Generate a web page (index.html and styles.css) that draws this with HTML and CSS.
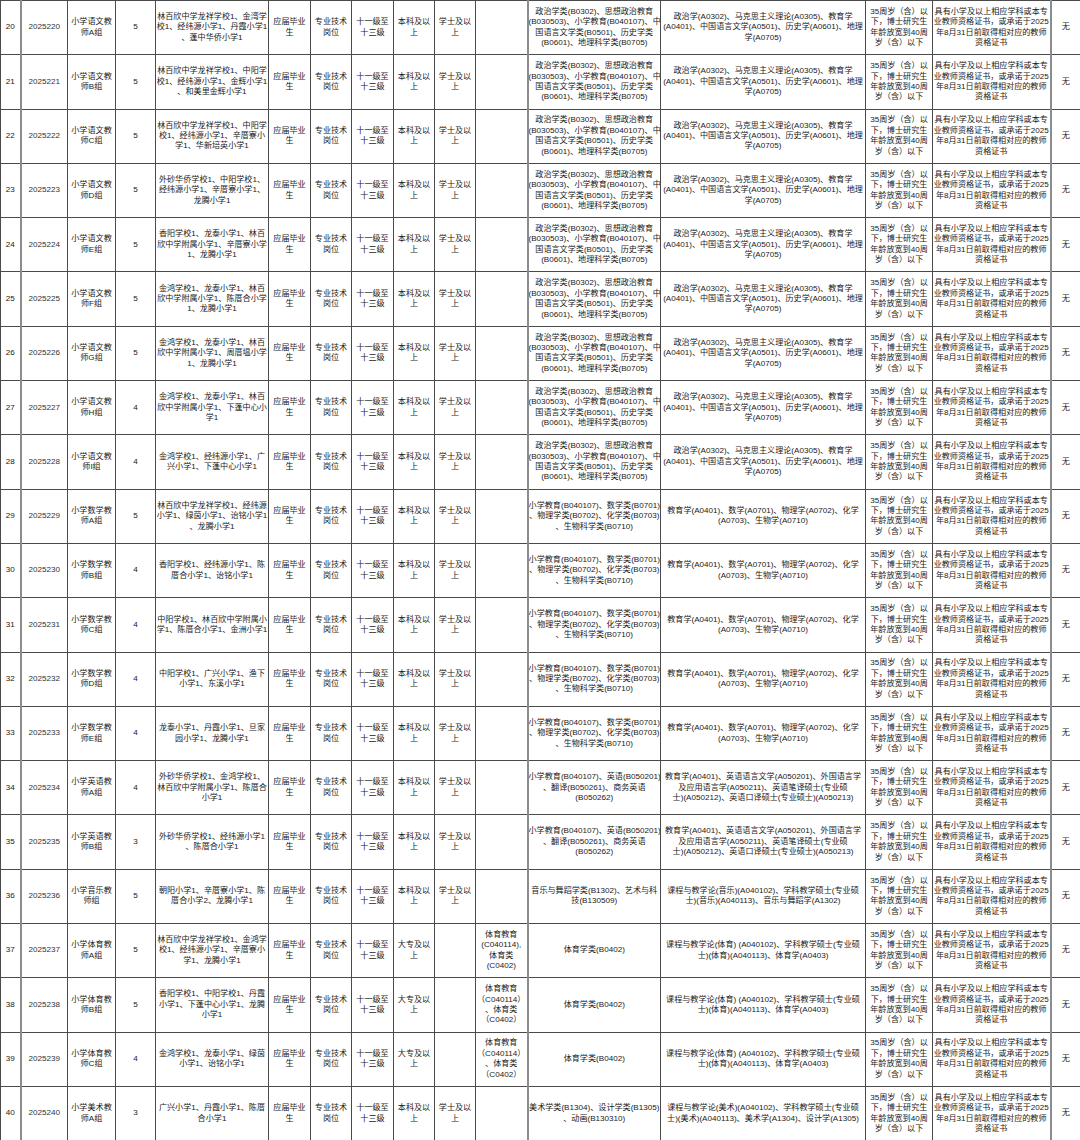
FILE: index.html
```html
<!DOCTYPE html>
<html lang="zh-CN">
<head>
<meta charset="utf-8">
<title>岗位表</title>
<link rel="stylesheet" href="styles.css">
</head>
<body>
<table class="grid">
<colgroup>
<col class="w-no"><col class="w-code"><col class="w-name"><col class="w-num"><col class="w-school">
<col class="w-obj"><col class="w-type"><col class="w-level"><col class="w-edu"><col class="w-deg">
<col class="w-zk"><col class="w-bk"><col class="w-yjs"><col class="w-age"><col class="w-qual"><col class="w-other">
</colgroup>
<tbody>
<tr>
<td>20</td><td class="sep num">2025220</td><td>小学语文教<br>师A组</td><td>5</td>
<td>林百欣中学龙祥学校1、金湾学<br>校1、经纬源小学1、丹霞小学1<br>、蓬中华侨小学1</td>
<td>应届毕业<br>生</td><td>专业技术<br>岗位</td><td>十一级至<br>十三级</td><td>本科及以<br>上</td><td>学士及以<br>上</td><td></td>
<td class="sep">政治学类(B0302)、思想政治教育<br>(B030503)、小学教育(B040107)、中<br>国语言文学类(B0501)、历史学类<br>(B0601)、地理科学类(B0705)</td>
<td>政治学(A0302)、马克思主义理论(A0305)、教育学<br>(A0401)、中国语言文学(A0501)、历史学(A0601)、地理<br>学(A0705)</td>
<td>35周岁（含）以<br>下，博士研究生<br>年龄放宽到40周<br>岁（含）以下</td>
<td>具有小学及以上相应学科或本专<br>业教师资格证书，或承诺于2025<br>年8月31日前取得相对应的教师<br>资格证书</td><td class="sep">无</td>
</tr>
<tr>
<td>21</td><td class="sep num">2025221</td><td>小学语文教<br>师B组</td><td>5</td>
<td>林百欣中学龙祥学校1、中阳学<br>校1、经纬源小学1、金辉小学1<br>、和美里金辉小学1</td>
<td>应届毕业<br>生</td><td>专业技术<br>岗位</td><td>十一级至<br>十三级</td><td>本科及以<br>上</td><td>学士及以<br>上</td><td></td>
<td class="sep">政治学类(B0302)、思想政治教育<br>(B030503)、小学教育(B040107)、中<br>国语言文学类(B0501)、历史学类<br>(B0601)、地理科学类(B0705)</td>
<td>政治学(A0302)、马克思主义理论(A0305)、教育学<br>(A0401)、中国语言文学(A0501)、历史学(A0601)、地理<br>学(A0705)</td>
<td>35周岁（含）以<br>下，博士研究生<br>年龄放宽到40周<br>岁（含）以下</td>
<td>具有小学及以上相应学科或本专<br>业教师资格证书，或承诺于2025<br>年8月31日前取得相对应的教师<br>资格证书</td><td class="sep">无</td>
</tr>
<tr>
<td>22</td><td class="sep num">2025222</td><td>小学语文教<br>师C组</td><td>5</td>
<td>林百欣中学龙祥学校1、中阳学<br>校1、经纬源小学1、辛厝寮小<br>学1、华新培英小学1</td>
<td>应届毕业<br>生</td><td>专业技术<br>岗位</td><td>十一级至<br>十三级</td><td>本科及以<br>上</td><td>学士及以<br>上</td><td></td>
<td class="sep">政治学类(B0302)、思想政治教育<br>(B030503)、小学教育(B040107)、中<br>国语言文学类(B0501)、历史学类<br>(B0601)、地理科学类(B0705)</td>
<td>政治学(A0302)、马克思主义理论(A0305)、教育学<br>(A0401)、中国语言文学(A0501)、历史学(A0601)、地理<br>学(A0705)</td>
<td>35周岁（含）以<br>下，博士研究生<br>年龄放宽到40周<br>岁（含）以下</td>
<td>具有小学及以上相应学科或本专<br>业教师资格证书，或承诺于2025<br>年8月31日前取得相对应的教师<br>资格证书</td><td class="sep">无</td>
</tr>
<tr>
<td>23</td><td class="sep num">2025223</td><td>小学语文教<br>师D组</td><td>5</td>
<td>外砂华侨学校1、中阳学校1、<br>经纬源小学1、辛厝寮小学1、<br>龙腾小学1</td>
<td>应届毕业<br>生</td><td>专业技术<br>岗位</td><td>十一级至<br>十三级</td><td>本科及以<br>上</td><td>学士及以<br>上</td><td></td>
<td class="sep">政治学类(B0302)、思想政治教育<br>(B030503)、小学教育(B040107)、中<br>国语言文学类(B0501)、历史学类<br>(B0601)、地理科学类(B0705)</td>
<td>政治学(A0302)、马克思主义理论(A0305)、教育学<br>(A0401)、中国语言文学(A0501)、历史学(A0601)、地理<br>学(A0705)</td>
<td>35周岁（含）以<br>下，博士研究生<br>年龄放宽到40周<br>岁（含）以下</td>
<td>具有小学及以上相应学科或本专<br>业教师资格证书，或承诺于2025<br>年8月31日前取得相对应的教师<br>资格证书</td><td class="sep">无</td>
</tr>
<tr>
<td>24</td><td class="sep num">2025224</td><td>小学语文教<br>师E组</td><td>5</td>
<td>香阳学校1、龙泰小学1、林百<br>欣中学附属小学1、辛厝寮小学<br>1、龙腾小学1</td>
<td>应届毕业<br>生</td><td>专业技术<br>岗位</td><td>十一级至<br>十三级</td><td>本科及以<br>上</td><td>学士及以<br>上</td><td></td>
<td class="sep">政治学类(B0302)、思想政治教育<br>(B030503)、小学教育(B040107)、中<br>国语言文学类(B0501)、历史学类<br>(B0601)、地理科学类(B0705)</td>
<td>政治学(A0302)、马克思主义理论(A0305)、教育学<br>(A0401)、中国语言文学(A0501)、历史学(A0601)、地理<br>学(A0705)</td>
<td>35周岁（含）以<br>下，博士研究生<br>年龄放宽到40周<br>岁（含）以下</td>
<td>具有小学及以上相应学科或本专<br>业教师资格证书，或承诺于2025<br>年8月31日前取得相对应的教师<br>资格证书</td><td class="sep">无</td>
</tr>
<tr>
<td>25</td><td class="sep num">2025225</td><td>小学语文教<br>师F组</td><td>5</td>
<td>金鸿学校1、龙泰小学1、林百<br>欣中学附属小学1、陈厝合小学<br>1、龙腾小学1</td>
<td>应届毕业<br>生</td><td>专业技术<br>岗位</td><td>十一级至<br>十三级</td><td>本科及以<br>上</td><td>学士及以<br>上</td><td></td>
<td class="sep">政治学类(B0302)、思想政治教育<br>(B030503)、小学教育(B040107)、中<br>国语言文学类(B0501)、历史学类<br>(B0601)、地理科学类(B0705)</td>
<td>政治学(A0302)、马克思主义理论(A0305)、教育学<br>(A0401)、中国语言文学(A0501)、历史学(A0601)、地理<br>学(A0705)</td>
<td>35周岁（含）以<br>下，博士研究生<br>年龄放宽到40周<br>岁（含）以下</td>
<td>具有小学及以上相应学科或本专<br>业教师资格证书，或承诺于2025<br>年8月31日前取得相对应的教师<br>资格证书</td><td class="sep">无</td>
</tr>
<tr>
<td>26</td><td class="sep num">2025226</td><td>小学语文教<br>师G组</td><td>5</td>
<td>金鸿学校1、龙泰小学1、林百<br>欣中学附属小学1、周厝塭小学<br>1、龙腾小学1</td>
<td>应届毕业<br>生</td><td>专业技术<br>岗位</td><td>十一级至<br>十三级</td><td>本科及以<br>上</td><td>学士及以<br>上</td><td></td>
<td class="sep">政治学类(B0302)、思想政治教育<br>(B030503)、小学教育(B040107)、中<br>国语言文学类(B0501)、历史学类<br>(B0601)、地理科学类(B0705)</td>
<td>政治学(A0302)、马克思主义理论(A0305)、教育学<br>(A0401)、中国语言文学(A0501)、历史学(A0601)、地理<br>学(A0705)</td>
<td>35周岁（含）以<br>下，博士研究生<br>年龄放宽到40周<br>岁（含）以下</td>
<td>具有小学及以上相应学科或本专<br>业教师资格证书，或承诺于2025<br>年8月31日前取得相对应的教师<br>资格证书</td><td class="sep">无</td>
</tr>
<tr>
<td>27</td><td class="sep num">2025227</td><td>小学语文教<br>师H组</td><td>4</td>
<td>金鸿学校1、龙泰小学1、林百<br>欣中学附属小学1、下蓬中心小<br>学1</td>
<td>应届毕业<br>生</td><td>专业技术<br>岗位</td><td>十一级至<br>十三级</td><td>本科及以<br>上</td><td>学士及以<br>上</td><td></td>
<td class="sep">政治学类(B0302)、思想政治教育<br>(B030503)、小学教育(B040107)、中<br>国语言文学类(B0501)、历史学类<br>(B0601)、地理科学类(B0705)</td>
<td>政治学(A0302)、马克思主义理论(A0305)、教育学<br>(A0401)、中国语言文学(A0501)、历史学(A0601)、地理<br>学(A0705)</td>
<td>35周岁（含）以<br>下，博士研究生<br>年龄放宽到40周<br>岁（含）以下</td>
<td>具有小学及以上相应学科或本专<br>业教师资格证书，或承诺于2025<br>年8月31日前取得相对应的教师<br>资格证书</td><td class="sep">无</td>
</tr>
<tr>
<td>28</td><td class="sep num">2025228</td><td>小学语文教<br>师I组</td><td>4</td>
<td>金鸿学校1、经纬源小学1、广<br>兴小学1、下蓬中心小学1</td>
<td>应届毕业<br>生</td><td>专业技术<br>岗位</td><td>十一级至<br>十三级</td><td>本科及以<br>上</td><td>学士及以<br>上</td><td></td>
<td class="sep">政治学类(B0302)、思想政治教育<br>(B030503)、小学教育(B040107)、中<br>国语言文学类(B0501)、历史学类<br>(B0601)、地理科学类(B0705)</td>
<td>政治学(A0302)、马克思主义理论(A0305)、教育学<br>(A0401)、中国语言文学(A0501)、历史学(A0601)、地理<br>学(A0705)</td>
<td>35周岁（含）以<br>下，博士研究生<br>年龄放宽到40周<br>岁（含）以下</td>
<td>具有小学及以上相应学科或本专<br>业教师资格证书，或承诺于2025<br>年8月31日前取得相对应的教师<br>资格证书</td><td class="sep">无</td>
</tr>
<tr>
<td>29</td><td class="sep num">2025229</td><td>小学数学教<br>师A组</td><td>5</td>
<td>林百欣中学龙祥学校1、经纬源<br>小学1、绿茵小学1、诒铭小学1<br>、龙腾小学1</td>
<td>应届毕业<br>生</td><td>专业技术<br>岗位</td><td>十一级至<br>十三级</td><td>本科及以<br>上</td><td>学士及以<br>上</td><td></td>
<td class="sep">小学教育(B040107)、数学类(B0701)<br>、物理学类(B0702)、化学类(B0703)<br>、生物科学类(B0710)</td>
<td>教育学(A0401)、数学(A0701)、物理学(A0702)、化学<br>(A0703)、生物学(A0710)</td>
<td>35周岁（含）以<br>下，博士研究生<br>年龄放宽到40周<br>岁（含）以下</td>
<td>具有小学及以上相应学科或本专<br>业教师资格证书，或承诺于2025<br>年8月31日前取得相对应的教师<br>资格证书</td><td class="sep">无</td>
</tr>
<tr>
<td>30</td><td class="sep num">2025230</td><td>小学数学教<br>师B组</td><td>4</td>
<td>香阳学校1、经纬源小学1、陈<br>厝合小学1、诒铭小学1</td>
<td>应届毕业<br>生</td><td>专业技术<br>岗位</td><td>十一级至<br>十三级</td><td>本科及以<br>上</td><td>学士及以<br>上</td><td></td>
<td class="sep">小学教育(B040107)、数学类(B0701)<br>、物理学类(B0702)、化学类(B0703)<br>、生物科学类(B0710)</td>
<td>教育学(A0401)、数学(A0701)、物理学(A0702)、化学<br>(A0703)、生物学(A0710)</td>
<td>35周岁（含）以<br>下，博士研究生<br>年龄放宽到40周<br>岁（含）以下</td>
<td>具有小学及以上相应学科或本专<br>业教师资格证书，或承诺于2025<br>年8月31日前取得相对应的教师<br>资格证书</td><td class="sep">无</td>
</tr>
<tr>
<td>31</td><td class="sep num">2025231</td><td>小学数学教<br>师C组</td><td>4</td>
<td>中阳学校1、林百欣中学附属小<br>学1、陈厝合小学1、金洲小学1</td>
<td>应届毕业<br>生</td><td>专业技术<br>岗位</td><td>十一级至<br>十三级</td><td>本科及以<br>上</td><td>学士及以<br>上</td><td></td>
<td class="sep">小学教育(B040107)、数学类(B0701)<br>、物理学类(B0702)、化学类(B0703)<br>、生物科学类(B0710)</td>
<td>教育学(A0401)、数学(A0701)、物理学(A0702)、化学<br>(A0703)、生物学(A0710)</td>
<td>35周岁（含）以<br>下，博士研究生<br>年龄放宽到40周<br>岁（含）以下</td>
<td>具有小学及以上相应学科或本专<br>业教师资格证书，或承诺于2025<br>年8月31日前取得相对应的教师<br>资格证书</td><td class="sep">无</td>
</tr>
<tr>
<td>32</td><td class="sep num">2025232</td><td>小学数学教<br>师D组</td><td>4</td>
<td>中阳学校1、广兴小学1、渔下<br>小学1、东溪小学1</td>
<td>应届毕业<br>生</td><td>专业技术<br>岗位</td><td>十一级至<br>十三级</td><td>本科及以<br>上</td><td>学士及以<br>上</td><td></td>
<td class="sep">小学教育(B040107)、数学类(B0701)<br>、物理学类(B0702)、化学类(B0703)<br>、生物科学类(B0710)</td>
<td>教育学(A0401)、数学(A0701)、物理学(A0702)、化学<br>(A0703)、生物学(A0710)</td>
<td>35周岁（含）以<br>下，博士研究生<br>年龄放宽到40周<br>岁（含）以下</td>
<td>具有小学及以上相应学科或本专<br>业教师资格证书，或承诺于2025<br>年8月31日前取得相对应的教师<br>资格证书</td><td class="sep">无</td>
</tr>
<tr>
<td>33</td><td class="sep num">2025233</td><td>小学数学教<br>师E组</td><td>4</td>
<td>龙泰小学1、丹霞小学1、旦家<br>园小学1、龙腾小学1</td>
<td>应届毕业<br>生</td><td>专业技术<br>岗位</td><td>十一级至<br>十三级</td><td>本科及以<br>上</td><td>学士及以<br>上</td><td></td>
<td class="sep">小学教育(B040107)、数学类(B0701)<br>、物理学类(B0702)、化学类(B0703)<br>、生物科学类(B0710)</td>
<td>教育学(A0401)、数学(A0701)、物理学(A0702)、化学<br>(A0703)、生物学(A0710)</td>
<td>35周岁（含）以<br>下，博士研究生<br>年龄放宽到40周<br>岁（含）以下</td>
<td>具有小学及以上相应学科或本专<br>业教师资格证书，或承诺于2025<br>年8月31日前取得相对应的教师<br>资格证书</td><td class="sep">无</td>
</tr>
<tr>
<td>34</td><td class="sep num">2025234</td><td>小学英语教<br>师A组</td><td>4</td>
<td>外砂华侨学校1、金鸿学校1、<br>林百欣中学附属小学1、陈厝合<br>小学1</td>
<td>应届毕业<br>生</td><td>专业技术<br>岗位</td><td>十一级至<br>十三级</td><td>本科及以<br>上</td><td>学士及以<br>上</td><td></td>
<td class="sep">小学教育(B040107)、英语(B050201)<br>、翻译(B050261)、商务英语<br>(B050262)</td>
<td>教育学(A0401)、英语语言文学(A050201)、外国语言学<br>及应用语言学(A050211)、英语笔译硕士(专业硕<br>士)(A050212)、英语口译硕士(专业硕士)(A050213)</td>
<td>35周岁（含）以<br>下，博士研究生<br>年龄放宽到40周<br>岁（含）以下</td>
<td>具有小学及以上相应学科或本专<br>业教师资格证书，或承诺于2025<br>年8月31日前取得相对应的教师<br>资格证书</td><td class="sep">无</td>
</tr>
<tr>
<td>35</td><td class="sep num">2025235</td><td>小学英语教<br>师B组</td><td>3</td>
<td>外砂华侨学校1、经纬源小学1<br>、陈厝合小学1</td>
<td>应届毕业<br>生</td><td>专业技术<br>岗位</td><td>十一级至<br>十三级</td><td>本科及以<br>上</td><td>学士及以<br>上</td><td></td>
<td class="sep">小学教育(B040107)、英语(B050201)<br>、翻译(B050261)、商务英语<br>(B050262)</td>
<td>教育学(A0401)、英语语言文学(A050201)、外国语言学<br>及应用语言学(A050211)、英语笔译硕士(专业硕<br>士)(A050212)、英语口译硕士(专业硕士)(A050213)</td>
<td>35周岁（含）以<br>下，博士研究生<br>年龄放宽到40周<br>岁（含）以下</td>
<td>具有小学及以上相应学科或本专<br>业教师资格证书，或承诺于2025<br>年8月31日前取得相对应的教师<br>资格证书</td><td class="sep">无</td>
</tr>
<tr>
<td>36</td><td class="sep num">2025236</td><td>小学音乐教<br>师组</td><td>5</td>
<td>朝阳小学1、辛厝寮小学1、陈<br>厝合小学2、龙腾小学1</td>
<td>应届毕业<br>生</td><td>专业技术<br>岗位</td><td>十一级至<br>十三级</td><td>本科及以<br>上</td><td>学士及以<br>上</td><td></td>
<td class="sep">音乐与舞蹈学类(B1302)、艺术与科<br>技(B130509)</td>
<td>课程与教学论(音乐)(A040102)、学科教学硕士(专业硕<br>士)(音乐)(A040113)、音乐与舞蹈学(A1302)</td>
<td>35周岁（含）以<br>下，博士研究生<br>年龄放宽到40周<br>岁（含）以下</td>
<td>具有小学及以上相应学科或本专<br>业教师资格证书，或承诺于2025<br>年8月31日前取得相对应的教师<br>资格证书</td><td class="sep">无</td>
</tr>
<tr>
<td>37</td><td class="sep num">2025237</td><td>小学体育教<br>师A组</td><td>5</td>
<td>林百欣中学龙祥学校1、金鸿学<br>校1、经纬源小学1、辛厝寮小<br>学1、龙腾小学1</td>
<td>应届毕业<br>生</td><td>专业技术<br>岗位</td><td>十一级至<br>十三级</td><td>大专及以<br>上</td><td></td>
<td>体育教育<br>(C040114),<br>体育类<br>(C0402)</td>
<td class="sep">体育学类(B0402)</td>
<td>课程与教学论(体育) (A040102)、学科教学硕士(专业硕<br>士)(体育)(A040113)、体育学(A0403)</td>
<td>35周岁（含）以<br>下，博士研究生<br>年龄放宽到40周<br>岁（含）以下</td>
<td>具有小学及以上相应学科或本专<br>业教师资格证书，或承诺于2025<br>年8月31日前取得相对应的教师<br>资格证书</td><td class="sep">无</td>
</tr>
<tr>
<td>38</td><td class="sep num">2025238</td><td>小学体育教<br>师B组</td><td>5</td>
<td>香阳学校1、中阳学校1、丹霞<br>小学1、下蓬中心小学1、龙腾<br>小学1</td>
<td>应届毕业<br>生</td><td>专业技术<br>岗位</td><td>十一级至<br>十三级</td><td>大专及以<br>上</td><td></td>
<td>体育教育<br>（C040114）<br>、体育类<br>（C0402）</td>
<td class="sep">体育学类(B0402)</td>
<td>课程与教学论(体育) (A040102)、学科教学硕士(专业硕<br>士)(体育)(A040113)、体育学(A0403)</td>
<td>35周岁（含）以<br>下，博士研究生<br>年龄放宽到40周<br>岁（含）以下</td>
<td>具有小学及以上相应学科或本专<br>业教师资格证书，或承诺于2025<br>年8月31日前取得相对应的教师<br>资格证书</td><td class="sep">无</td>
</tr>
<tr>
<td>39</td><td class="sep num">2025239</td><td>小学体育教<br>师C组</td><td>4</td>
<td>金鸿学校1、龙泰小学1、绿茵<br>小学1、诒铭小学1</td>
<td>应届毕业<br>生</td><td>专业技术<br>岗位</td><td>十一级至<br>十三级</td><td>大专及以<br>上</td><td></td>
<td>体育教育<br>（C040114）<br>、体育类<br>（C0402）</td>
<td class="sep">体育学类(B0402)</td>
<td>课程与教学论(体育) (A040102)、学科教学硕士(专业硕<br>士)(体育)(A040113)、体育学(A0403)</td>
<td>35周岁（含）以<br>下，博士研究生<br>年龄放宽到40周<br>岁（含）以下</td>
<td>具有小学及以上相应学科或本专<br>业教师资格证书，或承诺于2025<br>年8月31日前取得相对应的教师<br>资格证书</td><td class="sep">无</td>
</tr>
<tr>
<td>40</td><td class="sep num">2025240</td><td>小学美术教<br>师A组</td><td>3</td>
<td>广兴小学1、丹霞小学1、陈厝<br>合小学1</td>
<td>应届毕业<br>生</td><td>专业技术<br>岗位</td><td>十一级至<br>十三级</td><td>本科及以<br>上</td><td>学士及以<br>上</td><td></td>
<td class="sep">美术学类(B1304)、设计学类(B1305)<br>、动画(B130310)</td>
<td>课程与教学论(美术)(A040102)、学科教学硕士(专业硕<br>士)(美术)(A040113)、美术学(A1304)、设计学(A1305)</td>
<td>35周岁（含）以<br>下，博士研究生<br>年龄放宽到40周<br>岁（含）以下</td>
<td>具有小学及以上相应学科或本专<br>业教师资格证书，或承诺于2025<br>年8月31日前取得相对应的教师<br>资格证书</td><td class="sep">无</td>
</tr>
</tbody>
</table>
</body>
</html>
```
FILE: styles.css
```css
html, body {
  margin: 0;
  padding: 0;
  background: #ffffff;
}
body {
  width: 1080px;
  height: 1140px;
  overflow: hidden;
}
.grid {
  border-collapse: collapse;
  table-layout: fixed;
  width: 1080px;
  font-family: "Liberation Sans", "Noto Sans CJK SC", sans-serif;
  font-size: 8.1px;
  line-height: 10.4px;
  color: #1a1a1a;
}
.grid td {
  border: 1px solid #4a4a4a;
  text-align: center;
  vertical-align: middle;
  padding: 0;
  height: 53.3px;
  white-space: nowrap;
  overflow: hidden;
}
.grid td.sep {
  border-left: 2px solid #8c8c8c;
}
.grid td.num {
  color: #333333;
}
.w-no { width: 20px; }
.w-code { width: 47px; }
.w-name { width: 48px; }
.w-num { width: 40px; }
.w-school { width: 113px; }
.w-obj { width: 42px; }
.w-type { width: 41px; }
.w-level { width: 42px; }
.w-edu { width: 41px; }
.w-deg { width: 41px; }
.w-zk { width: 52px; }
.w-bk { width: 133px; }
.w-yjs { width: 205px; }
.w-age { width: 67px; }
.w-qual { width: 118px; }
.w-other { width: 30px; }
```
